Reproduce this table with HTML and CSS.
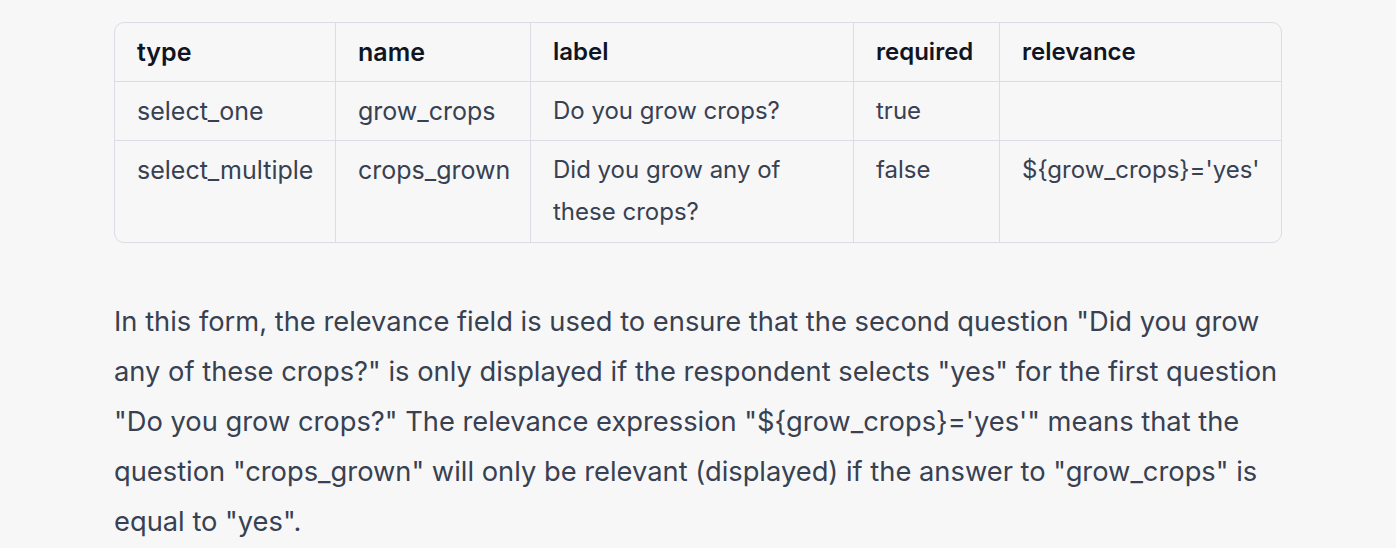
FILE: index.html
```html
<!DOCTYPE html>
<html>
<head>
<meta charset="utf-8">
<link rel="stylesheet" href="styles.css">
</head>
<body>
<main class="content">
  <div class="table-wrap">
    <table class="form-table">
      <colgroup>
        <col class="c-type"><col class="c-name"><col class="c-label"><col class="c-req"><col class="c-rel">
      </colgroup>
      <thead>
        <tr><th>type</th><th>name</th><th>label</th><th>required</th><th>relevance</th></tr>
      </thead>
      <tbody>
        <tr><td class="wide">select_one</td><td class="wide">grow_crops</td><td>Do you grow crops?</td><td>true</td><td></td></tr>
        <tr><td class="wide">select_multiple</td><td class="wide">crops_grown</td><td>Did you grow any of these crops?</td><td>false</td><td>${grow_crops}='yes'</td></tr>
      </tbody>
    </table>
  </div>
  <p class="text">In this form, the relevance field is used to ensure that the second question "Did you grow any of these crops?" is only displayed if the respondent selects "yes" for the first question "Do you grow crops?" The relevance expression "${grow_crops}='yes'" means that the question "crops_grown" will only be relevant (displayed) if the answer to "grow_crops" is equal to "yes".</p>
</main>
</body>
</html>
```

FILE: styles.css
```css
html, body {
  margin: 0;
  padding: 0;
  background: #f7f7f8;
}
body {
  font-family: Inter, "Noto Sans", sans-serif;
  color: #374151;
}
.content {
  width: 1168px;
  padding: 22px 0 0 114px;
}
.table-wrap {
  border: 1px solid #dcdce4;
  border-radius: 10px;
  overflow: hidden;
}
.form-table {
  width: 100%;
  border-collapse: separate;
  border-spacing: 0;
  table-layout: fixed;
  font-size: 24px;
  line-height: 42px;
}
.c-type { width: 221px; }
.c-name { width: 195px; }
.c-label { width: 323px; }
.c-req { width: 146px; }
.form-table th, .form-table td {
  text-align: left;
  vertical-align: top;
  padding: 8px 22px 8px 22px;
  border-right: 1px solid #dcdce4;
  border-bottom: 1px solid #dcdce4;
}
.form-table td.wide {
  font-size: 25px;
}
.form-table th:first-child, .form-table th:nth-child(2) {
  font-size: 25px;
}
.form-table th:last-child, .form-table td:last-child {
  border-right: none;
}
.form-table tbody tr:last-child td {
  border-bottom: none;
  padding-bottom: 9px;
}
.form-table th {
  font-weight: 600;
  color: #0f1522;
}
.text {
  margin: 54px 0 0 0;
  font-size: 27.3px;
  line-height: 50px;
}
```
